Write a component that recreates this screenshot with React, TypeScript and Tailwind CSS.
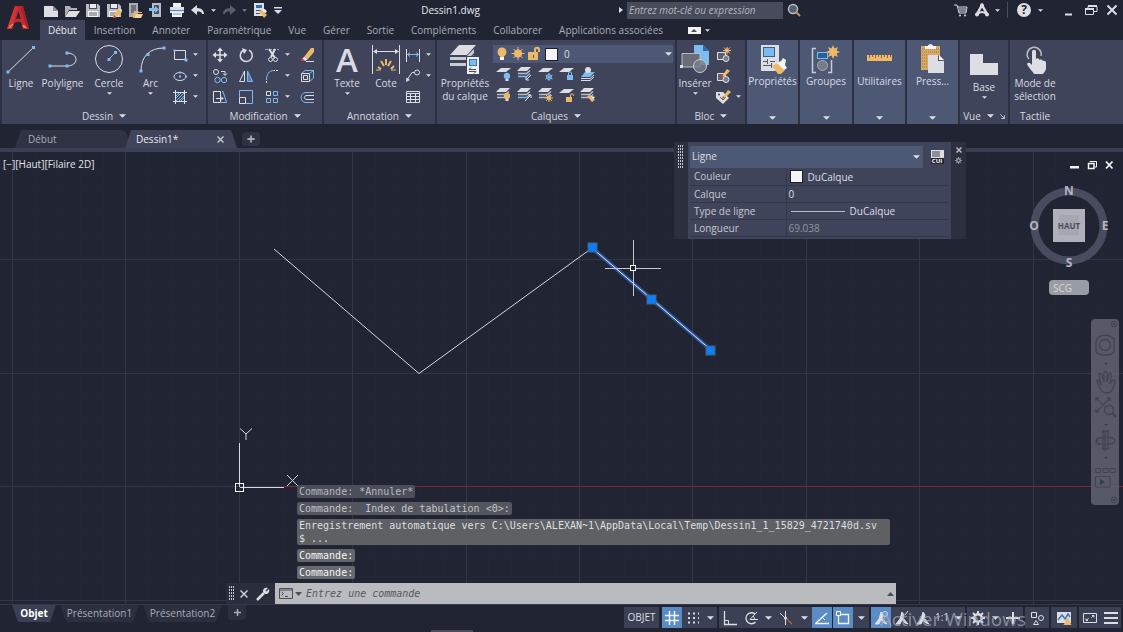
import React from "react";

type Kids = { children?: React.ReactNode };

const W = "#dcdee4";
const B = "#7dbcf0";
const O = "#edb968";

function Caret({ big = false, up = false }: { big?: boolean; up?: boolean }) {
  return (
    <svg viewBox="0 0 8 4" className={(big ? "h-1 w-[7px]" : "h-[3px] w-[5px]") + (up ? " rotate-180" : "") + " shrink-0"} aria-hidden="true">
      <path d="M0 0H8L4 4Z" fill={W} />
    </svg>
  );
}

function Ico({ children, size = 16, className = "" }: Kids & { size?: number; className?: string }) {
  return (
    <svg viewBox={`0 0 ${size} ${size}`} width={size} height={size} fill="none" stroke={W} className={"shrink-0 " + className} aria-hidden="true">
      {children}
    </svg>
  );
}

function Dot({ x, y, s = 3 }: { x: number; y: number; s?: number }) {
  return <rect x={x - s / 2} y={y - s / 2} width={s} height={s} fill={B} stroke="none" />;
}

function IconButton({ label, className = "", children }: Kids & { label: string; className?: string }) {
  return (
    <button type="button" aria-label={label} className={"flex shrink-0 items-center justify-center " + className}>
      {children}
    </button>
  );
}

/* ---------- Quick access toolbar ---------- */

const Disk = () => (
  <g stroke="none">
    <path d="M1 2H13L15 4V15H1Z" fill="#b9bcc4" />
    <rect x="4" y="2" width="8" height="5" fill="#4a4e5c" />
    <rect x="5" y="2" width="6" height="4" fill="#e8eaee" />
    <rect x="3" y="9" width="10" height="6" fill="#f2f3f5" />
    <path d="M4 11H12M4 13H12" stroke="#5b5f6c" />
  </g>
);

const Pencil = () => (
  <g stroke="none">
    <path d="M8 12L13 7L16 10L11 15L7 16Z" fill={O} />
    <path d="M13 7L14 6L16 8V10Z" fill="#f4e3c4" />
    <path d="M7 16L8 13L10 15Z" fill="#c2452d" />
  </g>
);

function QuickAccess() {
  return (
    <div className="flex h-full items-center">
      <IconButton label="Nouveau" className="w-[21px]">
        <Ico><path d="M1 4H10L15 9V15H1Z" fill={W} stroke="none" /><path d="M10 4V9H15Z" fill="#8d909c" stroke="none" /></Ico>
      </IconButton>
      <IconButton label="Ouvrir" className="w-[21px]">
        <Ico><path d="M1 15V4H6L7 6H13V8H5Z" fill="#aeb1ba" stroke="none" /><path d="M5 9H16L12 15H1Z" fill={W} stroke="none" /></Ico>
      </IconButton>
      <IconButton label="Enregistrer" className="w-[21px]"><Ico><Disk /></Ico></IconButton>
      <IconButton label="Enregistrer sous" className="w-[21px]"><Ico><Disk /><Pencil /></Ico></IconButton>
      <IconButton label="Ouvrir depuis le Web" className="w-[21px]">
        <Ico><path d="M2 1H11V15H2Z" fill="#a9acb5" stroke="none" /><path d="M4 3H9V11H4Z" fill="#6f7380" stroke="none" /><path d="M7 9H11L12 10H15V11H9L7 16H6Z" fill={O} stroke="none" /><path d="M9 12H16L14 16H7Z" fill="#f6d49b" stroke="none" /></Ico>
      </IconButton>
      <IconButton label="Enregistrer sur le Web" className="w-[21px]">
        <Ico><path d="M4 1H13V15H4Z" fill="#b9bcc4" stroke="none" /><path d="M6 3H11V12H6Z" fill="#4c505f" stroke="none" /><path d="M1 6H7V4L11 7.500L7 11V9H1Z" fill={B} stroke="none" /></Ico>
      </IconButton>
      <IconButton label="Tracer" className="w-[21px]">
        <Ico><path d="M4 1H12V5H4Z" fill="#f2f3f5" stroke="none" /><path d="M1 5H15V11H1Z" fill={W} stroke="none" /><path d="M1 8H15V9H1Z" fill="#4b8ccb" stroke="none" /><path d="M3 10H13V15H3Z" fill="#f2f3f5" stroke="none" /><path d="M4 12H12" stroke="#5d9bd4" /></Ico>
      </IconButton>
      <IconButton label="Annuler" className="w-[21px]">
        <Ico><path d="M1 8L7 3V6C12 6 14 9 14 12H12C12 10 10 9.500 7 9.500V13Z" fill={W} stroke="none" /></Ico>
      </IconButton>
      <IconButton label="Liste annuler" className="w-2.5"><Caret /></IconButton>
      <IconButton label="Rétablir" className="w-[21px]">
        <Ico><path d="M15 8L9 3V6C4 6 2 9 2 12H4C4 10 6 9.500 9 9.500V13Z" fill="#5a5e6c" stroke="none" /></Ico>
      </IconButton>
      <IconButton label="Liste rétablir" className="w-2.5 opacity-50"><Caret /></IconButton>
      <IconButton label="Gestionnaire" className="w-[21px]">
        <Ico><path d="M2 1H12V14H2Z" fill={W} stroke="none" /><rect x="4" y="3" width="6" height="3" fill="#2d6fb5" stroke="none" /><path d="M4 8.500H9M4 11.500H8" stroke="#4b4f5d" /><path d="M7 9L10 8L15 13L12 16Z" fill={O} stroke="none" /><path d="M10 8L13 7L15 10L13 11Z" fill="#f2f3f5" stroke="none" /></Ico>
      </IconButton>
      <IconButton label="Personnaliser" className="w-4">
        <svg viewBox="0 0 8 7" className="h-[7px] w-2" aria-hidden="true"><path d="M0 0H8V1.500H0ZM0 3H8L4 7Z" fill={W} /></svg>
      </IconButton>
    </div>
  );
}

function WindowControls() {
  return (
    <div className="flex h-full items-center pr-px">
      <IconButton label="Autodesk App Store" className="w-5">
        <Ico><path d="M1 3H4L6 11H13L14 5H5" /><path d="M6 7H14M6 9H13" stroke="#9ea1ac" strokeWidth="1.500" /><circle cx="7" cy="13.500" r="1" fill={W} stroke="none" /><circle cx="12" cy="13.500" r="1" fill={W} stroke="none" /></Ico>
      </IconButton>
      <IconButton label="Autodesk" className="w-[22px]">
        <Ico><path d="M2.500 13L8 3L13.500 13" strokeWidth="2.500" /><path d="M3 12.500C7 9 9 9 13 12.500" strokeWidth="2" /><circle cx="3" cy="12.500" r="2" fill={W} stroke="none" /><circle cx="13" cy="12.500" r="2" fill={W} stroke="none" /><circle cx="8" cy="3.500" r="2" fill={W} stroke="none" /></Ico>
      </IconButton>
      <IconButton label="Menu Autodesk" className="w-2"><Caret /></IconButton>
      <span className="mx-1.5 h-4 w-px bg-[#4a4d5a]" />
      <IconButton label="Aide" className="w-5">
        <span className="flex size-[14px] items-center justify-center rounded-full bg-[#dcdee4] text-[12px] font-bold leading-none text-[#212533]">?</span>
      </IconButton>
      <IconButton label="Menu aide" className="w-3"><Caret /></IconButton>
      <IconButton label="Réduire" className="ml-3 w-[22px]"><Ico><path d="M4 12.500H11" strokeWidth="2" /></Ico></IconButton>
      <IconButton label="Restaurer" className="w-[22px]"><Ico><path d="M5 7V4.500H14V9.500H11" /><path d="M2.500 7.500H10.500V12.500H2.500Z" /><path d="M5 4H14M2 7H11" strokeWidth="2" /></Ico></IconButton>
      <IconButton label="Fermer" className="w-5"><Ico><path d="M3.500 3.500L12.500 12.500M12.500 3.500L3.500 12.500" strokeWidth="2" /></Ico></IconButton>
    </div>
  );
}

const ribbonTabs = ["Insertion", "Annoter", "Paramétrique", "Vue", "Gérer", "Sortie", "Compléments", "Collaborer", "Applications associées"];

function Header() {
  return (
    <header className="flex h-10 shrink-0 bg-[#212533]">
      <a href="#menu" aria-label="Menu de l'application" className="flex w-10 shrink-0 justify-start pt-1 pl-[7px]">
        <svg viewBox="0 0 26 30" className="h-[27px] w-[23px]" aria-hidden="true">
          <path d="M9 2H18L25 28H18L16 21C13 19 10 20 8 22L6 28H0Z" fill="#c22a30" />
          <path d="M13 8L10 17C12 16 14 16 15.500 17Z" fill="#212533" />
          <path d="M9 2L4 16L0 28H5L8 17L12 4Z" fill="#d0353a" />
          <path d="M1 27L3 23L7 23L5 27ZM17 23L22 24L23 27H18Z" fill="#e0533f" />
          <path d="M3 26L7 22M18 24L22 27" stroke="#f0b07a" strokeWidth="1" />
          <path d="M18 2L25 28L22 26L15 4Z" fill="#a9222a" />
        </svg>
      </a>
      <div className="flex min-w-0 flex-1 flex-col">
        <div className="flex h-5 shrink-0 items-center">
          <QuickAccess />
          <h1 className="flex-1 text-center text-[#e4e5ea]">Dessin1.dwg</h1>
          <IconButton label="Développer" className="w-3">
            <svg viewBox="0 0 4 6" className="h-1.5 w-1" aria-hidden="true"><path d="M0 0L4 3L0 6Z" fill={W} /></svg>
          </IconButton>
          <input aria-label="Recherche" placeholder="Entrez mot-clé ou expression" className="h-[17px] w-[156px] bg-[#484b5b] px-0.5 italic text-white outline-none placeholder:text-[#b4b6bf]" />
          <IconButton label="Rechercher" className="w-[22px]">
            <Ico><circle cx="7" cy="7" r="4.500" strokeWidth="1.500" stroke="#b9bcc5" fill="#5a5e6b" /><path d="M10 10L14 14" stroke="#b99566" strokeWidth="2" /></Ico>
          </IconButton>
          <div className="w-[146px] shrink" />
          <WindowControls />
        </div>
        <nav aria-label="Ruban" className="flex h-5 items-stretch text-[#a9acb8]">
          <button type="button" className="mr-[9px] bg-[#40445a] px-2 text-[#e9eaef]">Début</button>
          <div className="flex items-center gap-[17px]">
            {ribbonTabs.map((t) => (
              <button type="button" key={t} className="whitespace-nowrap">{t}</button>
            ))}
          </div>
          <IconButton label="Réduire le ruban" className="ml-6 w-[14px]">
            <span className="flex h-[7px] w-[13px] items-center justify-center bg-[#f2f3f5]">
              <svg viewBox="0 0 6 3" className="h-[3px] w-1.5" aria-hidden="true"><path d="M0 3L3 0L6 3Z" fill="#4b4f5d" /></svg>
            </span>
          </IconButton>
          <IconButton label="Options du ruban" className="w-3"><Caret /></IconButton>
        </nav>
      </div>
    </header>
  );
}

/* ---------- Ribbon ---------- */

function Big({ label, second, caret = false, className, children }: Kids & { label: string; second?: string; caret?: boolean; className: string }) {
  return (
    <button type="button" className={"flex shrink-0 flex-col items-center pt-1 " + className}>
      <span className="flex h-[33px] items-start justify-center">{children}</span>
      <span className="whitespace-nowrap leading-[13px]">{label}</span>
      {second && <span className="whitespace-nowrap leading-[13px]">{second}</span>}
      {caret && <span className="mt-0.5 flex"><Caret /></span>}
    </button>
  );
}

function Panel({ title, className, extra, arrow = true, children }: Kids & { title: string; className: string; extra?: React.ReactNode; arrow?: boolean }) {
  return (
    <section aria-label={title} className={"flex flex-col bg-[#40445a] " + className}>
      <div className="flex flex-1">{children}</div>
      <button type="button" className="flex h-4 items-center justify-center gap-1.5 text-[#d5d7de]">
        {title}
        {arrow && <Caret big />}
        {extra}
      </button>
    </section>
  );
}

function BluePanel({ title, className, children }: Kids & { title: string; className: string }) {
  return (
    <section aria-label={title} className={"shrink-0 bg-[#4d5874] " + className}>
      <button type="button" className="flex size-full flex-col items-center pt-1 pb-1">
        <span className="flex h-[31px] items-center">{children}</span>
        <span className="leading-[13px]">{title}</span>
        <span className="mt-auto flex"><Caret big /></span>
      </button>
    </section>
  );
}

const Sheet = ({ y, c = W }: { y: number; c?: string }) => <path d={`M5 ${y}H15L10 ${y + 4}H0Z`} fill={c} stroke="none" />;

const Sheets = ({ blue = false }: { blue?: boolean }) => (
  <g>
    <path d="M4 1H14L10 5H0Z" fill={W} stroke="none" />
    <path d="M1 7.500H9.500L13 4.500" stroke="#b9bcc5" strokeWidth="1.500" />
    <path d="M1 10.500H9.500L13 7.500" stroke={blue ? B : "#b9bcc5"} strokeWidth="1.500" />
  </g>
);

const Spark = ({ x, y }: { x: number; y: number }) => (
  <g transform={`translate(${x} ${y})`}>
    <path d="M0 -4V4M-4 0H4M-3 -3L3 3M3 -3L-3 3" stroke={O} />
    <circle r="2" fill={O} stroke="none" />
  </g>
);

const Bulb = ({ x, y, c }: { x: number; y: number; c: string }) => (
  <g transform={`translate(${x} ${y})`} stroke="none">
    <circle r="3.200" fill={c} />
    <rect x="-1.500" y="3" width="3" height="2" fill={W} />
  </g>
);

const layerIcons: [string, React.ReactNode][] = [
  ["Désactiver", <><Sheet y={2} /><Bulb x={11} y={10} c={B} /></>],
  ["Isoler", <><Sheets blue /><path d="M9 14L14 9M9 11V14H12" /></>],
  ["Geler", <><Sheet y={2} /><g transform="translate(11 11)" stroke={B}><circle r="2.500" /><path d="M0 -4V4M-3.500 -2L3.500 2M3.500 -2L-3.500 2" /></g></>],
  ["Verrouiller", <><Sheet y={2} /><rect x="8" y="9" width="6" height="5" fill={B} stroke="none" /><path d="M9.500 9V7C9.500 5.500 12.500 5.500 12.500 7V9" stroke={B} /></>],
  ["Rendre courant", <><path d="M1 12.500H10L14 9M1 14.500H10L14 11" /><path d="M5 6H15L10 11H1Z" fill={B} stroke="none" /><circle cx="8" cy="4" r="3" fill={W} stroke="none" /></>],
  ["Activer tous", <><Sheets /><Bulb x={11} y={9} c={O} /></>],
  ["Désisoler", <><Sheets blue /><path d="M8 14L14 8M11 8H14V11" /></>],
  ["Dégeler", <><Sheets /><Spark x={11} y={11} /></>],
  ["Déverrouiller", <><Sheet y={2} /><rect x="7" y="10" width="6" height="5" fill={O} stroke="none" /><path d="M11.500 10V8C11.500 6.500 14.500 6.500 14.500 8V9" stroke={O} /></>],
  ["Faire correspondre", <><Sheets /><path d="M7 9L10 8L15 13L12 15Z" fill={O} stroke="none" /><path d="M11 9L13 12L15 10Z" fill="#fff" stroke="none" /></>],
];

function Ribbon() {
  return (
    <div className="flex h-[84px] shrink-0 gap-0.5 bg-[#2c3042] pl-0.5 text-[#d9dbe1]">
      <Panel title="Dessin" className="w-[204px] shrink-0">
        <Big label="Ligne" className="w-[38px]"><Ico size={32}><path d="M3 28L29 3" /><Dot x={3} y={28} /><Dot x={28.500} y={3.500} /></Ico></Big>
        <Big label="Polyligne" className="w-[45px]"><Ico size={32}><path d="M3 22H20C32 22 32 9 20 9" /><Dot x={3} y={22} /><Dot x={20} y={22} /><Dot x={20} y={9} /></Ico></Big>
        <Big label="Cercle" caret className="w-12"><Ico size={32}><circle cx="16" cy="15" r="13.500" /><path d="M16 15L22 9" stroke={B} /><Dot x={16} y={15.500} /><Dot x={22.500} y={8.500} /></Ico></Big>
        <Big label="Arc" caret className="w-[35px]"><Ico size={32}><path d="M6 27C6 12 15 4 29 4" /><Dot x={6} y={27} /><Dot x={13} y={10.500} /><Dot x={29} y={4} /></Ico></Big>
        <div className="grid grid-cols-[24px_6px] grid-rows-[repeat(3,21px)] items-center justify-items-center pt-1">
          <IconButton label="Rectangle"><Ico><path d="M2.500 3.500H13.500V12.500H2.500Z" /><Dot x={2.500} y={3.500} s={2} /><Dot x={14} y={13} /></Ico></IconButton><Caret />
          <IconButton label="Ellipse"><Ico><ellipse cx="8" cy="8.500" rx="6" ry="4" /><Dot x={8} y={8.500} s={2} /><Dot x={8} y={4.500} s={2} /><Dot x={14} y={8.500} s={2} /></Ico></IconButton><Caret />
          <IconButton label="Hachures"><Ico><path d="M1 3.500H15M1 12.500H15M3.500 1V15M12.500 1V15" /><path d="M4 7L7 4M4 9L9 4M4 12L12 4M7 12L12 7M9 12L12 9" stroke={B} /></Ico></IconButton><Caret />
        </div>
      </Panel>

      <Panel title="Modification" className="w-[114px] shrink-0">
        <div className="grid grid-cols-[24px_27px_25px_6px_33px] grid-rows-[repeat(3,21px)] items-center justify-items-center pt-1">
          <IconButton label="Déplacer"><Ico><path d="M8 2V14M2 8H14" strokeWidth="1.500" /><path d="M8 0.500L11 4H5ZM8 15.500L5 12H11ZM0.500 8L4 5V11ZM15.500 8L12 11V5Z" fill={W} stroke="none" /></Ico></IconButton>
          <IconButton label="Rotation"><Ico><path d="M5 3.500A6 6 0 1 0 11 3.200" strokeWidth="1.500" /><path d="M4 1L9 3L6 7Z" fill={W} stroke="none" /></Ico></IconButton>
          <IconButton label="Ajuster"><Ico><path d="M1 2.500H15" stroke="#9ea1ac" strokeDasharray="3 1" /><path d="M5 2L11 11M11 2L7 10" strokeWidth="2" /><circle cx="6.500" cy="12.500" r="2" /><circle cx="11.500" cy="12.500" r="2" /></Ico></IconButton>
          <Caret />
          <IconButton label="Effacer"><Ico><path d="M5 10L12 1H15V5L9 12Z" fill={O} stroke="none" /><path d="M3 12L5 10L9 12L6 14Z" fill="#f2f3f5" stroke="none" /><path d="M2 14L3 11L6 13.500L4 14Z" fill="#d9452f" stroke="none" /><path d="M7 14.500H15" /></Ico></IconButton>
          <IconButton label="Copier"><Ico><circle cx="4" cy="4" r="2.500" /><path d="M9 3.500H13V7M11 5.500L13 7.500L15 5.500" /><circle cx="5.500" cy="12" r="2.700" stroke={B} /><circle cx="12" cy="12" r="2.700" stroke={B} /></Ico></IconButton>
          <IconButton label="Miroir"><Ico><path d="M6.500 3V13.500H1.500Z" /><path d="M9.500 3V13.500H14.500Z" stroke={B} fill="#4b7fb5" /></Ico></IconButton>
          <IconButton label="Raccord"><Ico><path d="M2.500 15V10M9 2.500H15" strokeDasharray="2 1" /><path d="M2.500 12C2.500 6 5 2.500 10 2.500" stroke={B} /></Ico></IconButton>
          <Caret />
          <IconButton label="Décomposer"><Ico><path d="M2.500 5.500H10.500V13.500H2.500Z" stroke={W} /><path d="M2.500 5.500L6 2.500H14.500L10.500 5.500M14.500 2.500V10L10.500 13.500" stroke={B} /><path d="M4.500 7.500H8.500V11.500H4.500Z" /></Ico></IconButton>
          <IconButton label="Etirer"><Ico><path d="M1.500 2.500H8.500V13.500H1.500Z" /><path d="M10 2.500H11L14.500 13.500H9" stroke={B} /><path d="M4 9.500H11M9 7.500L11 9.500L9 11.500" /></Ico></IconButton>
          <IconButton label="Echelle"><Ico><path d="M1.500 8V1.500H14.500V14.500H8" stroke={B} /><path d="M1.500 8.500H7.500V14.500H1.500Z" /></Ico></IconButton>
          <IconButton label="Réseau"><Ico><path d="M9.500 2.500H13.500V6.500H9.500ZM2.500 9.500H6.500V13.500H2.500ZM9.500 9.500H13.500V13.500H9.500Z" stroke={B} /><path d="M2.500 2.500H6.500V6.500H2.500Z" /></Ico></IconButton>
          <Caret />
          <IconButton label="Décaler"><Ico><path d="M15 3.500H7C0.500 3.500 0.500 13.500 7 13.500H15" stroke={B} /><path d="M15 6.500H8C4.500 6.500 4.500 10.500 8 10.500H15" /></Ico></IconButton>
        </div>
      </Panel>

      <Panel title="Annotation" className="w-[111px] shrink-0">
        <Big label="Texte" caret className="w-[46px]"><span className="text-[33px] font-semibold leading-[31px]">A</span></Big>
        <Big label="Cote" className="w-8">
          <Ico size={32}>
            <path d="M2.500 1V30M29.500 1V30M4 7.500H28" /><path d="M3 7.500L7 5V10ZM29 7.500L25 5V10Z" fill={W} stroke="none" />
            <path d="M8 23L11 25M11 17L14 22M16 15V21M21 17L18 22M24 22L21 25" stroke={O} strokeWidth="2" />
            <path d="M6 26H11M21 26H26" stroke={O} />
          </Ico>
        </Big>
        <div className="grid grid-cols-[22px_9px] grid-rows-[repeat(3,21px)] items-center justify-items-center pt-1">
          <IconButton label="Linéaire"><Ico><path d="M1.500 2V15M14.500 2V15" /><path d="M2 7.500H14M5 5.500L2.500 7.500L5 9.500M11 5.500L13.500 7.500L11 9.500" stroke={B} /></Ico></IconButton><Caret />
          <IconButton label="Repère"><Ico><circle cx="12" cy="4.500" r="2.500" /><path d="M9.500 4.500H7L2 12" /><path d="M1 14L1.500 9.500L5 12Z" fill={W} stroke="none" /></Ico></IconButton><Caret />
          <IconButton label="Tableau"><Ico><path d="M1.500 2.500H14.500V13.500H1.500ZM1.500 4.500H14.500M1.500 7.500H14.500M1.500 10.500H14.500M5.500 4V13M10.500 4V13" /></Ico></IconButton>
        </div>
      </Panel>

      <Panel title="Calques" className="w-[238px] shrink-0">
        <Big label="Propriétés" second="du calque" className="w-14">
          <Ico size={32}>
            <g stroke="none">
              <path d="M10 1H27L18 11H1Z" fill={W} /><path d="M1 13H17L25 5V9L18 16H1Z" fill="#c9ccd3" /><path d="M1 19H17L25 11V14L18 22H1Z" fill="#c9ccd3" />
              <rect x="17" y="12" width="13" height="18" fill="#40445a" /><rect x="18" y="13" width="12" height="17" fill="#eceef1" /><rect x="20" y="15" width="8" height="7" fill="#3f75b3" /><rect x="21" y="16" width="6" height="5" fill={B} />
            </g>
            <path d="M20 25.500H27M22 23.500L20 25.500M20 27.500H27M25 29.500L27 27.500" stroke="#4b4f5d" />
          </Ico>
        </Big>
        <div className="flex min-w-0 flex-1 flex-col pt-[5px] pr-0.5">
          <div className="relative flex h-[18px] items-center bg-[#4d5874]">
            <div className="flex w-[67px] shrink-0 items-center pl-0.5">
              <Ico><circle cx="7" cy="6" r="4.500" fill={O} stroke="none" /><rect x="5" y="9" width="4" height="2" fill={O} stroke="none" /><rect x="5" y="11" width="4" height="3" fill="#f2f3f5" stroke="none" /></Ico>
              <Ico><path d="M7 1V14M0.500 7.500H13.500M2.500 3L11.500 12M11.500 3L2.500 12" stroke={O} /><circle cx="7" cy="7.500" r="4" fill={O} stroke="none" /></Ico>
              <Ico><rect x="1" y="6" width="10" height="8" fill={O} stroke="none" /><path d="M8 6V4C8 1 12 1 12 4V6" stroke={O} strokeWidth="2" /><rect x="6" y="9" width="1" height="3" fill="#4d5874" stroke="none" /></Ico>
              <span className="ml-0.5 size-[13px] shrink-0 border border-[#1d202b] bg-[#f4f5f7]" />
            </div>
            <select aria-label="Calque courant" className="h-full flex-1 appearance-none bg-transparent pl-1 outline-none"><option>0</option></select>
            <span className="pointer-events-none absolute right-px"><Caret big /></span>
          </div>
          <div className="grid grid-cols-[repeat(5,21px)] grid-rows-[21px_21px] items-center justify-items-center">
            {layerIcons.map(([n, g]) => (<IconButton key={n} label={n}><Ico>{g}</Ico></IconButton>))}
          </div>
        </div>
      </Panel>

      <Panel title="Bloc" className="w-[68px] shrink-0">
        <Big label="Insérer" caret className="w-9">
          <Ico size={32}>
            <path d="M15 1H24L30 7V21H15Z" fill={B} stroke="none" /><path d="M24 1V7H30Z" fill="#2e6aa8" stroke="none" />
            <path d="M3 9.500H21V23H3Z" fill="#6a6d78" stroke="#b9bcc5" /><circle cx="21" cy="22" r="6.500" fill="#7b7e89" fillOpacity="0.800" stroke="#c9ccd3" /><rect x="1" y="21" width="3" height="3" fill={W} stroke="none" />
          </Ico>
        </Big>
        <div className="grid grid-cols-[20px_10px] grid-rows-[repeat(3,21px)] items-center justify-items-center pt-1">
          <IconButton label="Créer un bloc"><Ico><path d="M2.500 5.500H10.500V12.500H2.500Z" fill="#5d606c" /><circle cx="11" cy="11.500" r="3" fill="#7b7e89" /><Spark x={12} y={3.500} /></Ico></IconButton><span />
          <IconButton label="Modifier un bloc"><Ico><path d="M2.500 5.500H10.500V12.500H2.500Z" fill="#5d606c" /><circle cx="11" cy="11.500" r="3" fill="#7b7e89" /><path d="M7 8L12 1L15 3L9 9Z" fill={O} stroke="none" /><path d="M6 10L7 7L9 9Z" fill="#d9452f" stroke="none" /></Ico></IconButton><span />
          <IconButton label="Attributs"><Ico><path d="M1 3H8L14 9L8 15L1 9Z" fill={W} stroke="none" /><circle cx="4" cy="5.500" r="1" fill="#40445a" stroke="none" /><path d="M5 8L8 11L11 8" stroke="#5b5f6c" /><path d="M8 8L13 1L16 3L10 9Z" fill={O} stroke="none" /><path d="M7 10L8 7L10 9Z" fill="#d9452f" stroke="none" /></Ico></IconButton><Caret />
        </div>
      </Panel>

      <BluePanel title="Propriétés" className="w-[51px]">
        <Ico size={32}>
          <rect x="4" y="1" width="18" height="26" fill={W} stroke="none" /><rect x="6.500" y="3.500" width="11" height="9" fill={B} stroke="#35638f" />
          <path d="M6 17.500H11M13 17.500H18M6 21.500H14M10.500 15V20M14.500 19V24" stroke="#555967" />
          <path d="M15 22L21 19L28 26L24 30H21Z" fill={O} stroke="none" /><path d="M20 19L24 17L26 14L29 16L28 21L30 24L27 26Z" fill="#f4f5f7" stroke="none" />
        </Ico>
      </BluePanel>
      <BluePanel title="Groupes" className="w-[52px]">
        <Ico size={32}>
          <path d="M6 4.500H2.500V28.500H6M18 28.500H21.500V16" stroke="#c9ccd3" strokeWidth="1.500" />
          <rect x="7.500" y="8.500" width="10" height="6" fill="#2b5f9c" stroke={B} /><circle cx="12.500" cy="21.500" r="5" fill="#777b87" stroke="#a9acb8" />
          <path d="M23 1L24.500 4.500L28 3L26.500 6.500L30 8L26.500 9.500L28 13L24.500 11.500L23 15L21.500 11.500L18 13L19.500 9.500L16 8L19.500 6.500L18 3L21.500 4.500Z" fill={O} stroke="none" />
        </Ico>
      </BluePanel>
      <BluePanel title="Utilitaires" className="w-[51px]">
        <Ico size={32}><rect x="3" y="11" width="25" height="6" fill={O} stroke="none" /><path d="M5.500 11V14M8.500 11V13M11.500 11V14M14.500 11V13M17.500 11V14M20.500 11V13M23.500 11V14M26.500 11V13" stroke="#8a6a38" /></Ico>
      </BluePanel>
      <BluePanel title="Press..." className="w-[51px]">
        <Ico size={32}>
          <rect x="4" y="2" width="19" height="24" fill="#d9aa66" stroke="none" /><path d="M5 5H22M5 8H22M5 11H12M5 14H10M5 17H10M5 20H10M5 23H10" stroke="#9c743a" strokeDasharray="1 1" />
          <path d="M8 5V2H11C11 -0.500 16 -0.500 16 2H19V5Z" fill="#f2f3f5" stroke="none" /><path d="M11 11H21L27 17V29H11Z" fill={W} stroke="none" /><path d="M21 11V17H27Z" fill="#4b4f5d" stroke="none" /><path d="M22 11L27 16H22Z" fill="#fff" stroke="none" />
        </Ico>
      </BluePanel>

      <Panel title="Vue" className="w-12 shrink-0" extra={
        <svg viewBox="0 0 6 6" className="size-[5px]" fill="none" stroke={W} aria-hidden="true"><path d="M0.500 0.500L5 5M5.500 1.500V5.500H1.500" /></svg>
      }>
        <Big label="Base" caret className="w-12 pt-2"><Ico size={32}><path d="M2 6H15V15H30V27H2Z" fill={W} stroke="none" /></Ico></Big>
      </Panel>
      <section aria-label="Tactile" className="flex flex-1 flex-col bg-[#40445a]">
        <div className="flex flex-1">
          <Big label="Mode de" second="sélection" className="w-[50px]">
            <Ico size={32}>
              <path d="M10 15A7 7 0 1 1 22 12" stroke="#b9bcc5" strokeWidth="1.500" />
              <path d="M13 8C13 5 17 5 17 8V15C18 14 20 14 20.500 16C22 15 23.500 16 24 17C25.500 16.500 27 17.500 27 19V24C27 27 25 28 24 30H15C14 28 11 25 9 22C7 19 9 18 11 19L13 21Z" fill={W} stroke="none" />
            </Ico>
          </Big>
        </div>
        <h2 className="flex h-4 w-[50px] items-center justify-center">Tactile</h2>
      </section>
    </div>
  );
}

/* ---------- Document tabs ---------- */

function DocumentTabs() {
  return (
    <nav aria-label="Documents" className="flex h-7 shrink-0 items-stretch border-b-4 border-[#3b3f53] bg-[#212533] pt-1.5 pl-[15px] text-[#a9acb8]">
      <button type="button" className="w-[113px] rounded-t-lg bg-[#2f3344] pl-[13px] text-left [clip-path:polygon(6px_0,100%_0,100%_100%,0_100%)]">Début</button>
      <div className="-ml-[3px] flex w-[112px] items-center rounded-t-lg bg-[#40445a] pr-[13px] pl-[11px] text-[#e9eaef] [clip-path:polygon(6px_0,calc(100%-6px)_0,100%_100%,0_100%)]">
        <button type="button" className="flex-1 text-left">Dessin1*</button>
        <IconButton label="Fermer Dessin1"><svg viewBox="0 0 7 7" className="size-[7px]" stroke="#c3c5cd" strokeWidth="1.500" aria-hidden="true"><path d="M0.500 0.500L6.500 6.500M6.500 0.500L0.500 6.500" /></svg></IconButton>
      </div>
      <IconButton label="Nouveau dessin" className="my-0.5 ml-[5px] w-[18px] rounded bg-[#2f3344]"><svg viewBox="0 0 9 9" className="size-2" stroke="#a9acb8" strokeWidth="2" aria-hidden="true"><path d="M4.500 0.500V8.500M0.500 4.500H8.500" /></svg></IconButton>
    </nav>
  );
}

/* ---------- Drawing area ---------- */

const majorX = Array.from({ length: 30 }, (_, i) => Math.round(13 + i * 113.4) - 0.5);
const majorY = Array.from({ length: 20 }, (_, i) => Math.round(-5 + i * 113.4) - 0.5);
const minorX = Array.from({ length: 150 }, (_, i) => Math.round(13 + i * 22.68) - 0.5);
const minorY = Array.from({ length: 100 }, (_, i) => Math.round(-5 + i * 22.68) - 0.5);

function Grip({ x, y }: { x: number; y: number }) {
  return <rect x={x - 4.5} y={y - 4.5} width="9" height="9" fill="#0a80f8" stroke="#4d5f80" />;
}

function Drawing() {
  return (
    <svg className="absolute inset-0 size-full" fill="none" role="img" aria-label="Dessin">
      {minorX.map((x) => <line key={"a" + x} x1={x} x2={x} y1="0" y2="2000" stroke="#232735" />)}
      {minorY.map((y) => <line key={"b" + y} y1={y} y2={y} x1="0" x2="4000" stroke="#232735" />)}
      {majorX.map((x) => <line key={"c" + x} x1={x} x2={x} y1="0" y2="2000" stroke="#333745" />)}
      {majorY.map((y) => <line key={"d" + y} y1={y} y2={y} x1="0" x2="4000" stroke="#333745" />)}
      <path d="M284 334.500H4000" stroke="#7a2734" />
      <polyline points="274,97 419,221.500 592,96" stroke="#d6d8dd" />
      <path d="M592 96L711 198" stroke="#2b559e" strokeWidth="4" />
      <path d="M592 96L711 198" stroke="#dfe7f5" />
      <Grip x={592.5} y={95.5} /><Grip x={651.5} y={147.5} /><Grip x={710.5} y={198.5} />
      <path d="M605 116.500H630M636 116.500H661M633.500 88V113M633.500 119V144" stroke="#c6c8cd" />
      <rect x="630.500" y="113.500" width="5" height="5" stroke="#f4f5f7" />
      <path d="M239.500 291V335M240 335.500H284" stroke="#d6d8dd" />
      <rect x="235.500" y="331.500" width="8" height="8" stroke="#f4f5f7" />
      <path d="M240 276.500L246 282L252 276.500M246 282V288M287 323L298 334M298 323L287 334" stroke="#d6d8dd" />
    </svg>
  );
}

const dots = Array.from({ length: 8 }, (_, i) => i);

function GripDots({ cols = 3, rows = 8 }: { cols?: number; rows?: number }) {
  return (
    <svg width={cols * 2} height={rows * 3} aria-hidden="true" className="shrink-0">
      {dots.slice(0, rows).map((r) => dots.slice(0, cols).map((c) => <rect key={r + "-" + c} x={c * 2} y={r * 3} width="1" height="2" fill="#c3c5cd" />))}
    </svg>
  );
}

function PropertyRow({ name, children }: Kids & { name: string }) {
  return (
    <tr className="h-[17px] border-b border-[#33374a]">
      <th scope="row" className="w-24 border-r border-[#33374a] p-0 pl-1 text-left font-normal text-[#c6c8d0]">{name}</th>
      <td className="p-0 pl-0.5"><span className="flex items-center leading-none">{children}</span></td>
    </tr>
  );
}

function QuickProperties() {
  return (
    <aside aria-label="Propriétés rapides" className="absolute -top-2.5 right-[157px] z-10 flex h-[97px] w-[292px] bg-[#2b2f3e] text-[#dcdee4]">
      <div className="flex w-[14px] justify-center pt-[3px]"><GripDots cols={3} rows={8} /></div>
      <div className="flex flex-1 flex-col bg-[#40445a] px-0.5 pt-1 pb-0.5">
        <div className="flex h-[23px] items-center">
          <div className="relative flex h-full flex-1 items-center bg-[#4d5874]">
            <select aria-label="Type d'objet" className="size-full appearance-none bg-transparent pl-0.5 outline-none"><option>Ligne</option></select>
            <span className="pointer-events-none absolute right-[3px]"><Caret big /></span>
          </div>
          <IconButton label="Personnaliser l'interface" className="ml-0.5 w-6 flex-col">
            <span className="flex h-2 w-[13px] justify-end border border-[#dcdee4] bg-[#8c8f99]"><span className="w-[3px] bg-[#dcdee4]" /></span>
            <span className="w-[13px] bg-[#23262f] text-center text-[6px] font-bold leading-[6px] text-white">CUI</span>
          </IconButton>
        </div>
        <table className="mt-px w-full border-collapse">
          <tbody>
            <PropertyRow name="Couleur"><span className="mr-[5px] ml-px size-[13px] border border-[#1d202b] bg-[#f4f5f7]" />DuCalque</PropertyRow>
            <PropertyRow name="Calque">0</PropertyRow>
            <PropertyRow name="Type de ligne"><span className="mr-[5px] ml-0.5 h-px w-[54px] bg-[#b9bcc5]" />DuCalque</PropertyRow>
            <PropertyRow name="Longueur"><span className="text-[#9194a1]">69.038</span></PropertyRow>
          </tbody>
        </table>
      </div>
      <div className="flex w-[15px] flex-col items-center gap-1 pt-[5px]">
        <IconButton label="Fermer la palette"><svg viewBox="0 0 6 6" className="size-1.5" stroke="#b9bcc5" strokeWidth="1.500" aria-hidden="true"><path d="M0.500 0.500L5.500 5.500M5.500 0.500L0.500 5.500" /></svg></IconButton>
        <IconButton label="Options de la palette"><svg viewBox="0 0 8 8" className="size-[7px]" stroke="#9a9da8" fill="none" aria-hidden="true"><circle cx="4" cy="4" r="2" strokeWidth="1.500" /><path d="M4 0V2M4 6V8M0 4H2M6 4H8M1 1L2 2M6 6L7 7M7 1L6 2M2 6L1 7" /></svg></IconButton>
      </div>
    </aside>
  );
}

function ViewControls() {
  return (
    <div className="absolute top-2 right-0 flex w-[108px] flex-col items-center">
      <div className="flex items-center gap-[5px] self-end pr-2">
        <IconButton label="Réduire la vue"><svg viewBox="0 0 12 10" className="h-2.5 w-3" aria-hidden="true"><path d="M1 6H10V8.500H1Z" fill="#f4f5f7" /></svg></IconButton>
        <IconButton label="Restaurer la vue"><svg viewBox="0 0 12 10" className="h-2.5 w-3" fill="none" stroke="#f4f5f7" aria-hidden="true"><path d="M4 2V1.500H10.500V7H9" /><path d="M2.500 3.500H8V8.500H2.500Z" strokeWidth="1.500" /></svg></IconButton>
        <IconButton label="Fermer la vue"><svg viewBox="0 0 12 10" className="h-2.5 w-3" stroke="#f4f5f7" strokeWidth="1.800" aria-hidden="true"><path d="M3 1.500L9.500 8.500M9.500 1.500L3 8.500" /></svg></IconButton>
      </div>
      <svg viewBox="0 0 84 90" className="mt-3 h-[90px] w-[84px]" role="img" aria-label="ViewCube" fontFamily="'Open Sans', sans-serif" fontWeight="700" textAnchor="middle" fill="#b4b6c0">
        <circle cx="42" cy="44" r="34.500" fill="none" stroke="#494c5f" strokeWidth="8" />
        <rect x="26" y="27" width="32" height="33" fill="#aeb1ba" />
        <rect x="32" y="33" width="20" height="20" fill="#a4a7b1" />
        <text x="42" y="47" fontSize="8" fill="#4a4d59">HAUT</text>
        <text x="42" y="13" fontSize="12">N</text>
        <text x="42" y="85" fontSize="12">S</text>
        <text x="7" y="48" fontSize="12">O</text>
        <text x="78" y="48" fontSize="12">E</text>
      </svg>
      <button type="button" className="mt-2 h-[15px] w-10 rounded bg-[#999ca5] pl-1 text-left leading-none text-[#d5d6db]">SCG</button>
    </div>
  );
}

function NavigationBar() {
  return (
    <div role="toolbar" aria-label="Navigation" className="absolute top-[167px] right-1 flex h-[186px] w-7 flex-col items-center justify-between rounded bg-[#5d606c] opacity-90">
      <svg viewBox="0 0 28 186" className="size-full" fill="none" stroke="#454855" aria-hidden="true">
        <circle cx="23" cy="5" r="3" /><path d="M21.500 3.500L24.500 6.500M24.500 3.500L21.500 6.500" />
        <path d="M6 20C9 15 19 15 23 20V33C20 37 9 37 5 33V24Z" strokeWidth="1.300" /><circle cx="14" cy="26" r="5.500" strokeWidth="1.300" />
        <path d="M13 44H17L15 46ZM13 105H17L15 107ZM13 138H17L15 140Z" fill="#3b3e4b" stroke="none" />
        <path d="M6 63C5 61 7 60 8 62L10 66L8 56C8 54 10 54 11 56L13 63L13 54C13 52 16 52 16 54V63L18 55C19 53 21 54 20 57L19 65L21 62C23 60 25 61 24 63C22 68 22 74 16 74C10 74 10 70 6 63Z" strokeWidth="1.300" />
        <path d="M5 79L19 93M19 79L5 93M5 82V79H8M16 79H19V82M5 90V93H8" strokeWidth="1.300" /><circle cx="18" cy="91" r="4.500" fill="#5d606c" strokeWidth="1.300" /><path d="M21 94L25 98" strokeWidth="2" />
        <path d="M14 112V132M12 112H17V130H12Z" strokeWidth="1.300" /><path d="M5 122C5 117 24 117 24 122C24 126 10 126 7 124M7 121L5 124L9 126" strokeWidth="1.300" />
        <path d="M4.500 149.500H9.500V153.500H4.500ZM12 149.500H17V153.500H12ZM19 149.500H24V153.500H19ZM4.500 157.500H19V168H4.500Z" /><path d="M9 160L14 163L9 166Z" fill="#3b3e4b" stroke="none" />
        <circle cx="23" cy="181" r="3" /><path d="M21.500 180.500H24.500L23 182.500Z" />
      </svg>
    </div>
  );
}

function CommandLine() {
  return (
    <div className="absolute bottom-0 left-[226px] w-[670px] font-['DejaVu_Sans_Mono','Liberation_Mono',monospace]">
      <div role="log" className="mb-1 ml-[71px] flex flex-col items-start gap-1 whitespace-pre leading-[13px]">
        <p className="rounded-xs bg-[#4b4e59] px-0.5 text-[#b6b8be]">Commande: *Annuler*</p>
        <p className="rounded-xs bg-[#53565f] px-0.5 text-[#c3c5ca]">{"Commande:  Index de tabulation <0>:"}</p>
        <p className="w-[593px] rounded-xs bg-[#5e6064] px-0.5 text-[#dcdee2]">{"Enregistrement automatique vers C:\\Users\\ALEXAN~1\\AppData\\Local\\Temp\\Dessin1_1_15829_4721740d.sv\n$ ..."}</p>
        <p className="rounded-xs bg-[#62656a] px-0.5 text-[#f4f5f7]">Commande:</p>
        <p className="rounded-xs bg-[#66696e] px-0.5 text-[#f4f5f7]">Commande:</p>
      </div>
      <div className="flex h-[21px]">
        <div className="flex w-[49px] items-center gap-[3px] bg-[#2a2e3c] pl-[3px]">
          <GripDots cols={3} rows={5} />
          <IconButton label="Fermer" className="w-3"><svg viewBox="0 0 8 8" className="size-2" stroke="#c9ccd3" strokeWidth="1.500" aria-hidden="true"><path d="M0.500 0.500L7.500 7.500M7.500 0.500L0.500 7.500" /></svg></IconButton>
          <IconButton label="Personnaliser" className="ml-0.5"><Ico><path d="M2 14L9 7" strokeWidth="2.500" /><path d="M13 2L10.500 4.500L11.500 5.500L14 3C15 6 13 8.500 10 8L8 6C7.500 3 10 1 13 2Z" fill={W} stroke="none" /></Ico></IconButton>
        </div>
        <label htmlFor="commande" className="flex items-center gap-0.5 bg-[#b9bbbe] pl-1" aria-label="Commande">
          <svg viewBox="0 0 14 11" className="h-[11px] w-[14px]" fill="none" stroke="#4b4f5d" aria-hidden="true"><path d="M0.500 0.500H13.500V10.500H0.500ZM0 2H14" /><path d="M2.500 4L4.500 5.500L2.500 7.500M6 8.500H9" /></svg>
          <svg viewBox="0 0 7 4" className="h-1 w-[7px]" aria-hidden="true"><path d="M0 0H7L3.500 4Z" fill="#4b4f5d" /></svg>
        </label>
        <input id="commande" placeholder="Entrez une commande" className="min-w-0 flex-1 bg-[#b9bbbe] pl-1 italic text-[#23262f] outline-none placeholder:text-[#555861]" />
        <IconButton label="Historique" className="w-3 bg-[#b9bbbe]"><svg viewBox="0 0 7 4" className="h-1 w-[7px]" aria-hidden="true"><path d="M0 4H7L3.500 0Z" fill="#4b4f5d" /></svg></IconButton>
      </div>
    </div>
  );
}

/* ---------- Status bar ---------- */

function Tool({ label, on = false, className = "w-[21px]", children }: Kids & { label: string; on?: boolean; className?: string }) {
  return (
    <button type="button" aria-label={label} aria-pressed={on} className={"flex h-full shrink-0 items-center justify-center " + (on ? "bg-[#5c8cc4] " : "bg-[#3c4054] ") + className}>
      {children}
    </button>
  );
}

const Person = () => <path d="M8 2L10 5L9 8L14 14L11 13L8 10L6 14H2L6 9Z" fill={W} stroke={W} />;

function StatusBar() {
  return (
    <footer className="relative flex h-7 shrink-0 border-t border-[#33384a] bg-[#212533]">
      <nav aria-label="Présentations" className="flex h-[17px] flex-1 items-stretch pl-[12px] text-[#a9acb8]">
        <button type="button" className="w-11 rounded-b-lg bg-[#3a3f54] font-bold text-white [clip-path:polygon(0_0,100%_0,calc(100%-6px)_100%,6px_100%)]">Objet</button>
        <button type="button" className="ml-1 w-[79px] rounded-b-lg bg-[#2b2f3f] [clip-path:polygon(0_0,100%_0,calc(100%-6px)_100%,6px_100%)]">Présentation1</button>
        <button type="button" className="ml-1 w-[79px] rounded-b-lg bg-[#2b2f3f] [clip-path:polygon(0_0,100%_0,calc(100%-6px)_100%,6px_100%)]">Présentation2</button>
        <IconButton label="Nouvelle présentation" className="mb-0.5 ml-1.5 w-[18px] rounded-b bg-[#2b2f3f]"><svg viewBox="0 0 7 7" className="size-[7px]" stroke="#a9acb8" strokeWidth="1.500" aria-hidden="true"><path d="M3.500 0V7M0 3.500H7" /></svg></IconButton>
      </nav>
      <div role="toolbar" aria-label="Etat" className="mt-0.5 mr-0.5 flex h-[21px] gap-0.5 text-[#dcdee4]">
        <Tool label="Objet ou papier" className="w-[35px]">OBJET</Tool>
        <div className="ml-px flex">
          <Tool label="Grille" on className="w-5"><Ico><path d="M5.500 1V15M10.500 1V15M1 5.500H15M1 10.500H15" strokeWidth="1.500" stroke="#eef1f6" /></Ico></Tool>
          <Tool label="Accrochage"><Ico><path d="M3 3.500H14M3 8H14M3 12.500H14" strokeWidth="2" strokeDasharray="2 3" /></Ico></Tool>
          <Tool label="Options d'accrochage" className="w-[14px]"><Caret big /></Tool>
        </div>
        <div className="flex">
          <Tool label="Ortho"><Ico><path d="M2.500 1V14.500H15" strokeWidth="1.300" /><path d="M2.500 10.500H6.500V14" /></Ico></Tool>
          <Tool label="Repérage polaire"><Ico><path d="M12 4A5.500 5.500 0 1 0 12.500 12" strokeWidth="1.300" /><path d="M7 9.500H15M7 9.500L14 2M10 6A4 4 0 0 1 11.500 9.500" /></Ico></Tool>
          <Tool label="Options polaires" className="w-[14px]"><Caret big /></Tool>
          <Tool label="Dessin isométrique"><Ico><path d="M7.500 1V15" /><path d="M2 3L7 8" /><path d="M8 8L14 14" stroke="#a0604a" strokeWidth="1.500" /><circle cx="7.500" cy="8" r="1.500" fill={W} stroke="none" /></Ico></Tool>
          <Tool label="Options isométriques" className="w-4"><Caret big /></Tool>
          <Tool label="Repérage d'accrochage" on className="w-5"><Ico><path d="M1 13.500H15M2 13L13 3" strokeWidth="1.500" stroke="#eef1f6" /><path d="M8 7L11 10" stroke="#eef1f6" /></Ico></Tool>
          <Tool label="Accrochage aux objets" on className="ml-px w-5"><Ico><path d="M3.500 4.500H13.500V13.500H3.500Z" strokeWidth="1.300" stroke="#eef1f6" /><path d="M1.500 1.500H5.500V5.500H1.500Z" fill="#5c8cc4" stroke="#fff" /></Ico></Tool>
          <Tool label="Options d'accrochage aux objets" className="w-4"><Caret big /></Tool>
        </div>
        <div className="flex">
          <Tool label="Visibilité des annotations" on className="w-5"><Ico><Person /><circle cx="12" cy="4" r="2.500" stroke="#c9dcf0" /></Ico></Tool>
          <Tool label="Echelles automatiques"><Ico><Person /><path d="M11 5L14 1" /></Ico></Tool>
          <Tool label="Echelle d'annotation"><Ico><Person /></Ico></Tool>
          <Tool label="Valeur d'échelle" className="w-[18px]">1:1</Tool>
          <Tool label="Liste des échelles" className="w-[14px]"><Caret big /></Tool>
        </div>
        <div className="flex">
          <Tool label="Espace de travail"><Ico><circle cx="8" cy="8" r="3.800" strokeWidth="2.500" /><path d="M8 1V4M8 12V15M1 8H4M12 8H15M3 3L5 5M11 11L13 13M13 3L11 5M5 11L3 13" strokeWidth="2" /></Ico></Tool>
          <Tool label="Options d'espace" className="w-[14px]"><Caret big /></Tool>
          <Tool label="Moniteur"><Ico><path d="M8 2V14M1 8H15" strokeWidth="2" /></Ico></Tool>
        </div>
        <Tool label="Isoler les objets" className="w-6"><Ico><path d="M2.500 2.500H7.500V7.500H2.500Z" /><circle cx="12" cy="8" r="2.500" /><path d="M7 10.500L9.500 14.500H4.500Z" /></Ico></Tool>
        <Tool label="Performances graphiques" className="w-[26px]"><Ico><rect x="1" y="2" width="14" height="11" fill={W} stroke="none" /><path d="M2 10L6 5L9 9L12 4L14 7" stroke="#3f75b3" strokeWidth="1.500" /><path d="M11.500 7L15.500 15H7.500Z" fill={O} stroke="none" /></Ico></Tool>
        <div className="flex">
          <Tool label="Plein écran"><Ico><path d="M1.500 3.500H14.500V12.500H1.500Z" /><path d="M4 10.500L6.500 8.500M12 5.500L9.500 7.500M4 8.500V10.500H6M12 7.500V5.500H10" /></Ico></Tool>
          <Tool label="Personnalisation"><Ico><path d="M1 3H15M1 8H15M1 13H15" strokeWidth="2" /></Ico></Tool>
        </div>
      </div>
      <p className="pointer-events-none absolute right-[97px] bottom-0 text-[19px] leading-[26px] text-[#a9acb8]/70">Activer Windows</p>
      <div className="absolute bottom-0 left-[431px] h-0.5 w-[42px] bg-[#4b4d55]" />
    </footer>
  );
}

export default function App() {
  return (
    <div className="flex min-h-screen flex-col overflow-hidden bg-[#212533] font-['Open_Sans','Noto_Sans',sans-serif] text-[10px] text-[#dcdee4]">
      <Header />
      <Ribbon />
      <DocumentTabs />
      <main className="relative flex-1">
        <Drawing />
        <p className="relative px-[3px] pt-1 leading-4 text-[#e4e5ea]">[−][Haut][Filaire 2D]</p>
        <ViewControls />
        <NavigationBar />
        <QuickProperties />
        <CommandLine />
      </main>
      <StatusBar />
    </div>
  );
}
